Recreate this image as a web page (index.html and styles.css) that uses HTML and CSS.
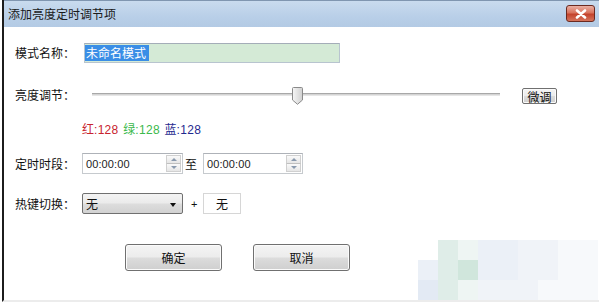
FILE: index.html
```html
<!DOCTYPE html>
<html lang="zh">
<head>
<meta charset="utf-8">
<title>添加亮度定时调节项</title>
<link rel="stylesheet" href="styles.css">
</head>
<body>
<div class="window">
  <div class="titlebar">
    <span class="title">添加亮度定时调节项</span>
    <div class="close">
      <svg width="14" height="10" viewBox="0 0 14 10"><path d="M3 1.5 L11 8.5 M11 1.5 L3 8.5" stroke="#fff" stroke-width="2.6" stroke-linecap="round"/></svg>
    </div>
  </div>
  <div class="content">
    <div class="row r1">
      <span class="label">模式名称：</span>
      <div class="textbox"><span class="sel">未命名模式</span></div>
    </div>
    <div class="row r2">
      <span class="label">亮度调节：</span>
      <div class="slider">
        <div class="track"></div>
        <svg class="thumb" width="11" height="18" viewBox="0 0 11 18">
          <defs><linearGradient id="tg" x1="0" y1="0" x2="1" y2="0"><stop offset="0" stop-color="#f6f6f6"/><stop offset="1" stop-color="#d0d0d0"/></linearGradient></defs>
          <path d="M0.5 1.5 Q0.5 0.5 1.5 0.5 H9.5 Q10.5 0.5 10.5 1.5 V13 L5.5 17.3 L0.5 13 Z" fill="url(#tg)" stroke="#8a8a8a"/>
        </svg>
      </div>
      <div class="btn fine">微调</div>
    </div>
    <div class="row r3">
      <span class="label"></span>
      <span class="rgb"><span class="red">红<span class="n">:128</span></span> <span class="green">绿<span class="n">:128</span></span> <span class="blue">蓝<span class="n">:128</span></span></span>
    </div>
    <div class="row r4">
      <span class="label">定时时段：</span>
      <div class="spin w1"><span class="val">00:00:00</span>
        <div class="arrows"><div class="ar up"></div><div class="ar down"></div></div>
      </div>
      <span class="to">至</span>
      <div class="spin w2"><span class="val">00:00:00</span>
        <div class="arrows"><div class="ar up"></div><div class="ar down"></div></div>
      </div>
    </div>
    <div class="row r5">
      <span class="label">热键切换：</span>
      <div class="combo"><span>无</span><span class="caret"></span></div>
      <span class="plus">+</span>
      <div class="keybox">无</div>
    </div>
    <div class="row r6">
      <div class="btn big">确定</div>
      <div class="btn big">取消</div>
    </div>
  </div>
  <div class="wm">
    <i class="c0"></i><i class="c1"></i><i class="c2"></i><i class="c3"></i><i class="c3"></i><i class="c4"></i><i class="c4"></i><i class="c5"></i><i class="c5"></i>
    <i class="c3"></i><i class="c1"></i><i class="c6"></i><i class="c3"></i><i class="c3"></i><i class="c4"></i><i class="c4"></i><i class="c5"></i><i class="c5"></i>
    <i class="c7"></i><i class="c1"></i><i class="c2"></i><i class="c4"></i><i class="c4"></i><i class="c4"></i><i class="c5"></i><i class="c5"></i><i class="c5"></i>
  </div>
</div>
</body>
</html>
```
FILE: styles.css
```css
html, body {
  margin: 0;
  padding: 0;
  background: #fff;
}
body {
  width: 599px;
  height: 302px;
  overflow: hidden;
  font-family: "Noto Sans CJK SC", "Liberation Sans", sans-serif;
  font-size: 12px;
  color: #111;
}
.window {
  position: relative;
  margin-left: 2px;
  border-left: 2px solid #1c1c1c;
  height: 300px;
  border-bottom: 2px solid #ececec;
  display: flex;
  flex-direction: column;
  background: #fff;
}
.titlebar {
  height: 26px;
  border-top: 1px solid #8096b0;
  background: linear-gradient(#c9dbee, #b9cfe8 60%, #b3cae4);
  display: flex;
  align-items: center;
  padding-left: 4px;
}
.title {
  color: #1a1a1a;
  font-size: 12px;
  line-height: 14px;
}
.close {
  margin-left: auto;
  margin-right: 4px;
  align-self: flex-start;
  margin-top: 4px;
  width: 27px;
  height: 15px;
  border: 1px solid #6b2a20;
  border-radius: 3px;
  background: linear-gradient(#eab0a4, #d9735d 45%, #c4432c 55%, #d5745c);
  display: flex;
  align-items: center;
  justify-content: center;
}
.close svg { display: block; }
.content {
  display: flex;
  flex-direction: column;
  padding-left: 11px;
}
.row {
  display: flex;
  align-items: center;
}
.label {
  width: 67px;
  flex: none;
  font-size: 12px;
  line-height: 14px;
}
.r1 { margin-top: 16px; height: 20px; }
.r2 { margin-top: 23px; height: 18px; }
.r3 { margin-top: 18px; height: 14px; }
.r4 { margin-top: 17px; height: 21px; }
.r5 { margin-top: 19px; height: 21px; }
.r6 { margin-top: 30px; height: 27px; margin-left: 110px; gap: 31px; }

.textbox {
  margin-left: 2px;
  width: 254px;
  height: 18px;
  border: 1px solid #b8c4cf;
  border-top-color: #a4adb8;
  background: #d4ead6;
  display: flex;
  align-items: center;
}
.sel {
  background: #3a8ee6;
  color: #fff;
  line-height: 16px;
  padding: 0 3px 0 1px;
  font-size: 12px;
}
.slider {
  position: relative;
  margin-left: 10px;
  width: 408px;
  height: 18px;
  display: flex;
  align-items: center;
}
.track {
  width: 100%;
  height: 1px;
  margin-top: -2px;
  border-top: 1px solid #a8a8a8;
  border-bottom: 1px solid #e6e6e6;
  background: #d4d4d4;
}
.thumb {
  position: absolute;
  left: 200px;
  top: 1px;
  display: block;
}
.btn {
  border: 1px solid #707070;
  border-radius: 3px;
  background: linear-gradient(#f4f4f4, #ececec 48%, #dcdcdc 52%, #cfcfcf);
  display: flex;
  align-items: center;
  justify-content: center;
  box-shadow: inset 0 0 0 1px #fbfbfb;
  font-size: 12px;
  color: #111;
}
.fine {
  margin-left: 22px;
  width: 33px;
  height: 14px;
  margin-top: 2px;
  border-radius: 2px;
}
.big {
  width: 95px;
  height: 25px;
}
.rgb {
  font-size: 12px;
  line-height: 14px;
  white-space: pre;
  word-spacing: 2px;
}
.n { font-family: "Liberation Sans", sans-serif; font-size: 12px; letter-spacing: 0.3px; }
.red { color: #c8232e; }
.green { color: #3bb94b; }
.blue { color: #1f2a8f; }
.spin {
  height: 19px;
  border: 1px solid #c6cace;
  border-top-color: #aeb2b8;
  display: flex;
  align-items: center;
  font-family: "Liberation Sans", sans-serif;
  font-size: 11px;
  color: #222;
}
.w1 { width: 99px; }
.w2 { width: 98px; }
.val { padding-left: 3px; flex: 1; letter-spacing: 0.1px; }
.arrows {
  width: 15px;
  height: 17px;
  margin-right: 1px;
  display: flex;
  flex-direction: column;
}
.ar {
  flex: 1;
  border: 1px solid #d0d0d0;
  background: linear-gradient(#fafafa, #e6e6e6);
  position: relative;
}
.ar.up { border-bottom-color: #c0c0c0; }
.ar.down { border-top: none; }
.ar::after {
  content: "";
  position: absolute;
  left: 4px;
  top: 2px;
  border-left: 3px solid transparent;
  border-right: 3px solid transparent;
}
.up::after { border-bottom: 3px solid #8a9aae; }
.down::after { border-top: 3px solid #8a9aae; top: 2px; }
.to {
  margin-left: 2px;
  margin-right: 5px;
  font-size: 12px;
  width: 13px;
}
.combo {
  height: 19px;
  border: 1px solid #707070;
  border-radius: 2px;
  background: linear-gradient(#f3f3f3, #ebebeb 48%, #dddddd 52%, #d2d2d2);
  display: flex;
  align-items: center;
  padding-left: 3px;
  box-sizing: content-box;
  width: 96px;
}
.caret {
  margin-left: auto;
  margin-right: 6px;
  width: 0;
  height: 0;
  border-left: 3.5px solid transparent;
  border-right: 3.5px solid transparent;
  border-top: 4px solid #111;
  margin-top: 2px;
}
.plus {
  margin-left: 8px;
  width: 12px;
  font-family: "Liberation Sans", sans-serif;
  font-size: 11px;
}
.keybox {
  width: 36px;
  height: 19px;
  border: 1px solid #d6d6d6;
  display: flex;
  align-items: center;
  justify-content: center;
}
.wm {
  position: absolute;
  left: 414px;
  top: 240px;
  display: grid;
  grid-template-columns: repeat(9, 20px);
  grid-auto-rows: 20px;
}
.wm i { display: block; }
.c0 { background: #fff; }
.c1 { background: #dfede8; }
.c2 { background: #eef5f3; }
.c3 { background: #ebf0f7; }
.c4 { background: #f0f3f8; }
.c5 { background: #f7f9fb; }
.c6 { background: #d0e6dc; }
.c7 { background: #e3eaf4; }
```
